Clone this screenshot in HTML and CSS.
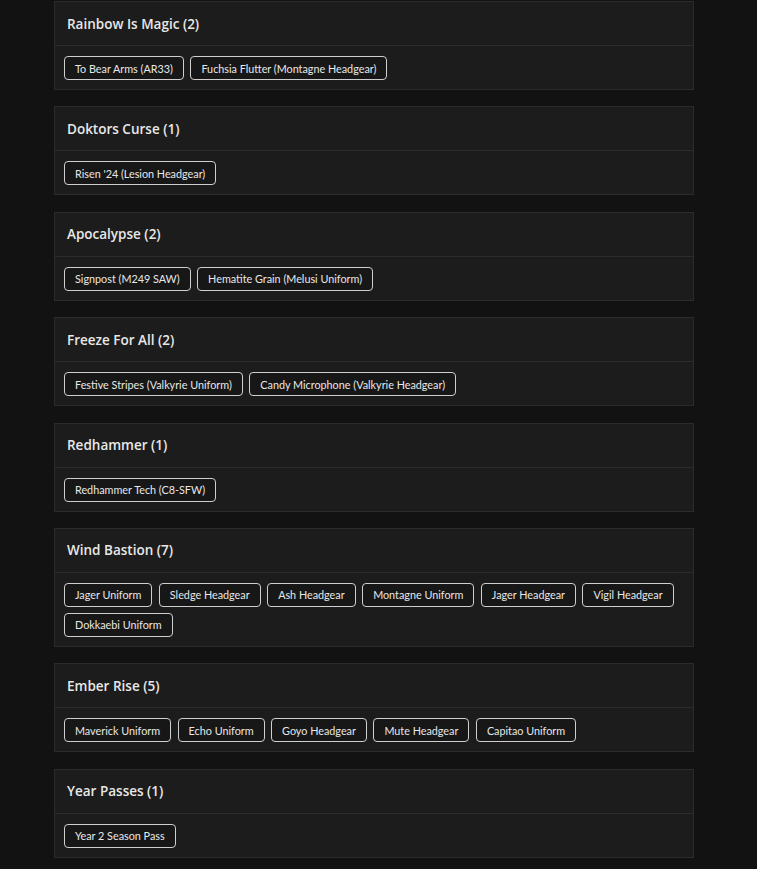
FILE: index.html
```html
<!DOCTYPE html>
<html lang="en">
<head>
<meta charset="utf-8">
<title>Bundles</title>
<link rel="stylesheet" href="styles.css">
</head>
<body>
<main class="list">
  <section class="card">
    <h2 class="card-title">Rainbow Is Magic (2)</h2>
    <div class="tags">
      <span class="tag">To Bear Arms (AR33)</span>
      <span class="tag">Fuchsia Flutter (Montagne Headgear)</span>
    </div>
  </section>
  <section class="card">
    <h2 class="card-title">Doktors Curse (1)</h2>
    <div class="tags">
      <span class="tag">Risen '24 (Lesion Headgear)</span>
    </div>
  </section>
  <section class="card">
    <h2 class="card-title">Apocalypse (2)</h2>
    <div class="tags">
      <span class="tag">Signpost (M249 SAW)</span>
      <span class="tag">Hematite Grain (Melusi Uniform)</span>
    </div>
  </section>
  <section class="card">
    <h2 class="card-title">Freeze For All (2)</h2>
    <div class="tags">
      <span class="tag">Festive Stripes (Valkyrie Uniform)</span>
      <span class="tag">Candy Microphone (Valkyrie Headgear)</span>
    </div>
  </section>
  <section class="card">
    <h2 class="card-title">Redhammer (1)</h2>
    <div class="tags">
      <span class="tag">Redhammer Tech (C8-SFW)</span>
    </div>
  </section>
  <section class="card">
    <h2 class="card-title">Wind Bastion (7)</h2>
    <div class="tags">
      <span class="tag">Jager Uniform</span>
      <span class="tag">Sledge Headgear</span>
      <span class="tag">Ash Headgear</span>
      <span class="tag">Montagne Uniform</span>
      <span class="tag">Jager Headgear</span>
      <span class="tag">Vigil Headgear</span>
      <span class="tag">Dokkaebi Uniform</span>
    </div>
  </section>
  <section class="card">
    <h2 class="card-title">Ember Rise (5)</h2>
    <div class="tags">
      <span class="tag">Maverick Uniform</span>
      <span class="tag">Echo Uniform</span>
      <span class="tag">Goyo Headgear</span>
      <span class="tag">Mute Headgear</span>
      <span class="tag">Capitao Uniform</span>
    </div>
  </section>
  <section class="card">
    <h2 class="card-title">Year Passes (1)</h2>
    <div class="tags">
      <span class="tag">Year 2 Season Pass</span>
    </div>
  </section>
</main>
</body>
</html>
```

FILE: styles.css
```css
html, body {
  margin: 0;
  padding: 0;
  background: #121212;
}

body {
  font-family: "Open Sans", "DejaVu Sans", sans-serif;
  color: #e6e6e6;
}

.list {
  width: 640px;
  margin-left: 54px;
  padding-top: 1px;
  display: flex;
  flex-direction: column;
  gap: 16.4px;
}

.card {
  background: #1c1c1c;
  border: 1px solid #2b2b2b;
}

.card-title {
  margin: 0;
  height: 43px;
  display: flex;
  align-items: center;
  padding: 0 12px;
  font-size: 13.5px;
  font-weight: 600;
  color: #e8e8e8;
  border-bottom: 1px solid #2b2b2b;
}

.tags {
  display: flex;
  flex-wrap: wrap;
  gap: 6px 6.5px;
  padding: 10px 6px 9px 9px;
}

.tag {
  box-sizing: border-box;
  height: 24px;
  display: inline-flex;
  align-items: center;
  padding: 0 10px;
  border: 1px solid #cfcfcf;
  border-radius: 4px;
  background: #171717;
  font-family: "Lato", "Open Sans", sans-serif;
  font-size: 10.8px;
  color: #e8e8e8;
  white-space: nowrap;
}
```
